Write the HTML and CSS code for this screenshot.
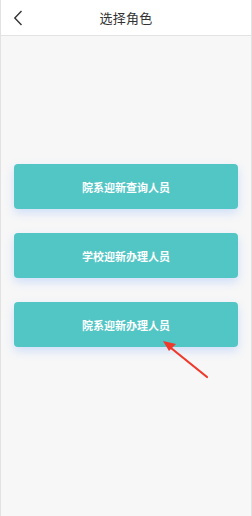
FILE: index.html
```html
<!DOCTYPE html>
<html lang="zh">
<head>
<meta charset="utf-8">
<link rel="stylesheet" href="styles.css">
</head>
<body>
<div class="page">
  <header class="header">
    <span class="back">
      <svg width="10" height="16" viewBox="0 0 10 16"><path d="M8.5 1 L1.8 8 L8.5 15" fill="none" stroke="#333" stroke-width="1.4"/></svg>
    </span>
    <h1 class="title">选择角色</h1>
  </header>
  <main class="roles">
    <button class="role">院系迎新查询人员</button>
    <button class="role">学校迎新办理人员</button>
    <button class="role">院系迎新办理人员</button>
  </main>
  <svg class="pointer" width="60" height="50" viewBox="0 0 60 50">
    <path d="M50 42 L14 13" stroke="#f0392b" stroke-width="2.2" stroke-linecap="round"/>
    <polygon points="6,6 19,9 12,16" fill="#f0392b"/>
  </svg>
</div>
</body>
</html>
```
FILE: styles.css
```css
html, body {
  margin: 0;
  padding: 0;
}
body {
  font-family: "Noto Sans CJK SC", "Noto Sans", sans-serif;
  background: #f7f7f7;
}
.page {
  position: relative;
  height: 516px;
  box-sizing: border-box;
  border-left: 1px solid #e2e2e2;
  border-right: 1px solid #e2e2e2;
  background: #f7f7f7;
}
.header {
  height: 35px;
  background: #fff;
  border-bottom: 1px solid #e3e3e3;
  display: flex;
  align-items: center;
  justify-content: center;
  position: relative;
}
.back {
  position: absolute;
  left: 12px;
  top: 10px;
  display: flex;
}
.title {
  margin: 0;
  font-size: 13px;
  font-weight: normal;
  color: #333;
  letter-spacing: 0.3px;
}
.roles {
  display: flex;
  flex-direction: column;
  gap: 24px;
  padding: 128px 13px 0 13px;
}
.role {
  height: 45px;
  border: none;
  border-radius: 4px;
  background: #52c5c5;
  color: #fff;
  font-family: "Noto Sans CJK SC", "Noto Sans", sans-serif;
  font-size: 11px;
  font-weight: bold;
  box-shadow: 0 4px 10px rgba(90, 150, 255, 0.25);
  padding: 0;
}
.pointer {
  position: absolute;
  left: 156px;
  top: 335px;
}
```
